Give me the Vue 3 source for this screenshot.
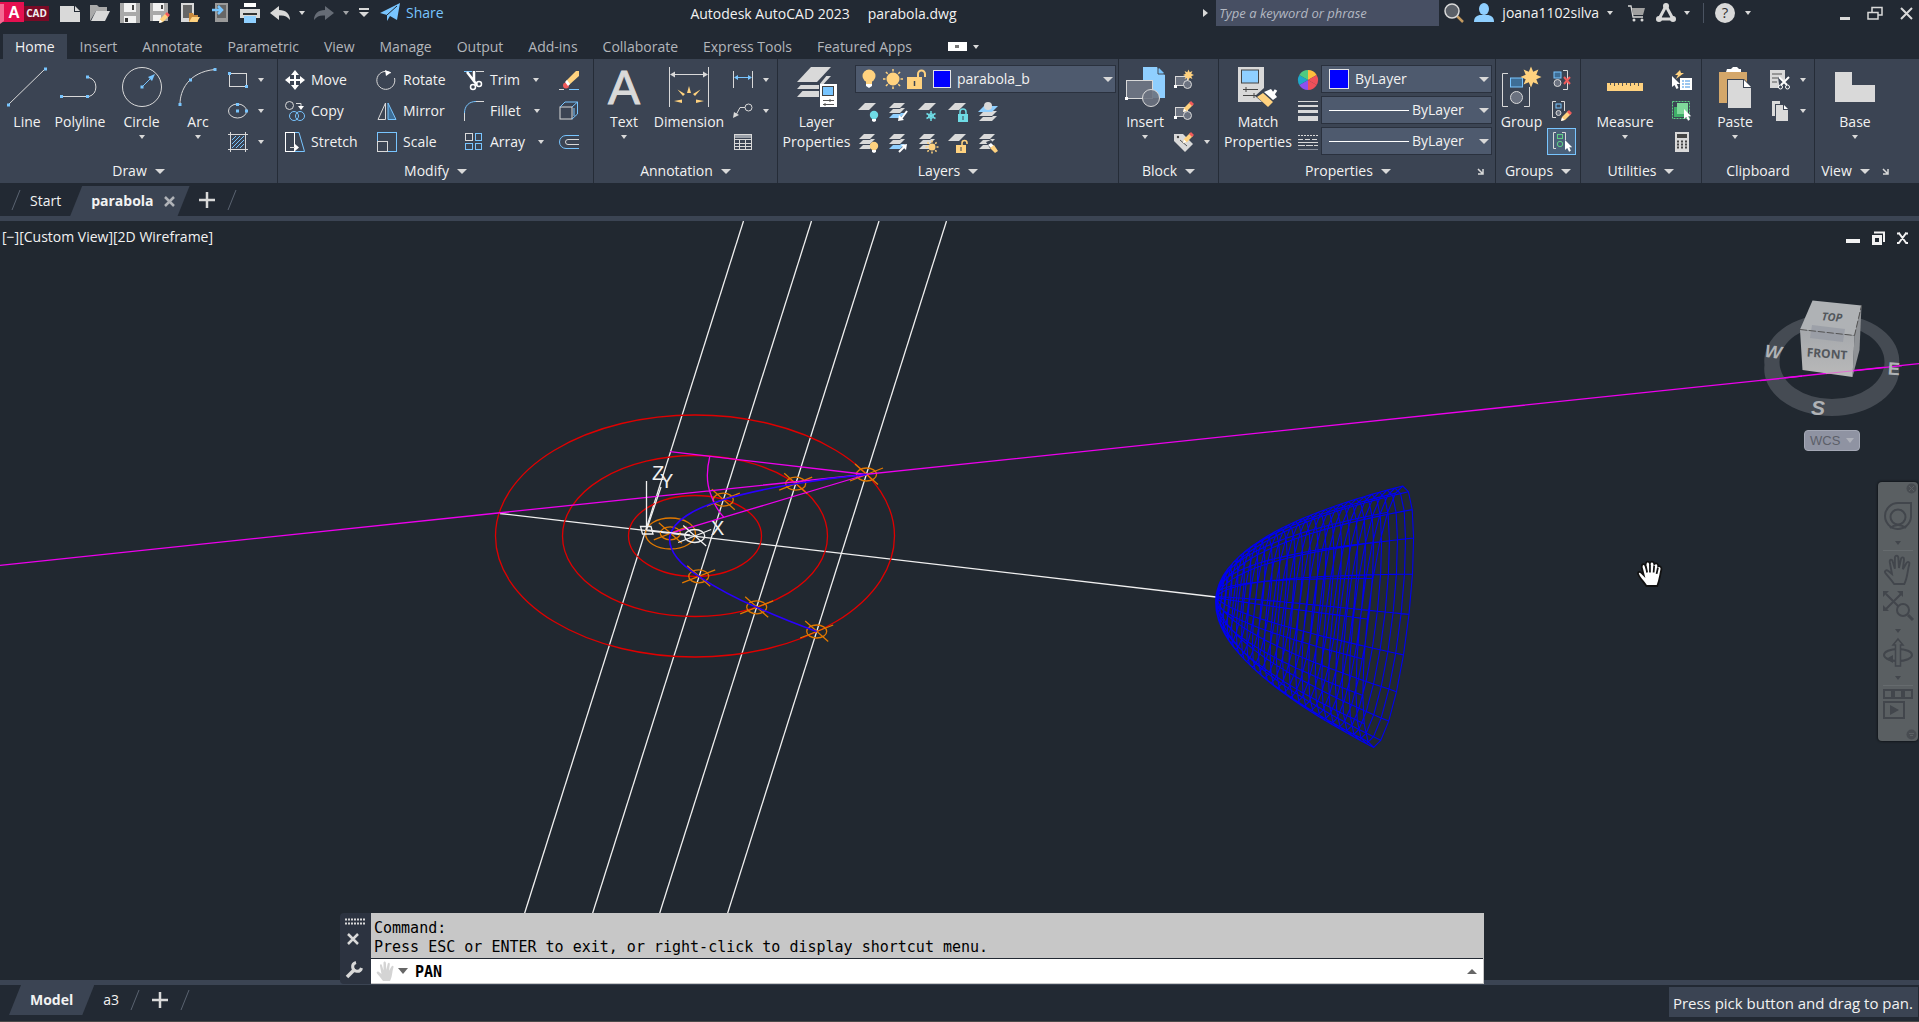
<script setup>
import { h } from 'vue'

const G = '#d9d9d9'
const B = '#78c5ff'
const Y = '#ffd27f'
const R = '#f05a5a'
const T = '#6fdce6'
const N = '#5fcf85'
const P = '#3b4453'

const sq = (x, y) => `<rect x="${x - 1.5}" y="${y - 1.5}" width="3" height="3" fill="${B}"/>`
const line = (d, c = G, w = 1) => `<path d="${d}" fill="none" stroke="${c}" stroke-width="${w}"/>`
const fill = (d, c = G) => `<path d="${d}" fill="${c}"/>`
const sheet = `${fill('M0 8L7 1H18L11 8Z')}`
const stack = (last = G) =>
  `${fill('M1 16L6 11H17L12 16Z', last)}${fill('M1 12L6 7H17L12 12Z', P)}${fill('M1 11L6 6H17L12 11Z')}${fill('M1 7L6 2H17L12 7Z', P)}${fill('M1 6L6 1H17L12 6Z')}`
const bulb = (c) => `<circle cx="16" cy="13" r="4.2" fill="${c}"/>${fill('M14 17H18V19L16 20L14 19Z', '#fff')}`
const pencil = (x, y) => `<g transform="translate(${x} ${y})">${fill('M0 10L1 6L7 0L10 3L4 9Z', Y)}${fill('M6 1L8 -1L11 2L9 4Z', R)}${fill('M0 10L1 6.500L3.500 9Z', '#fff')}</g>`
const pointer = (x, y, s = 1) => `<g transform="translate(${x} ${y}) scale(${s})">${fill('M0 0V11L2.500 9L4.500 13L6.500 12L4.800 8H8Z', '#fff')}</g>`
const scissors = (x, y) => `<g transform="translate(${x} ${y})">${line('M0 0L8 8M10 0L2 8', '#fff', 2)}<circle cx="1.500" cy="10" r="2" fill="none" stroke="#fff"/><circle cx="8.500" cy="10" r="2" fill="none" stroke="#fff"/></g>`
const star = (cx, cy, r, n = 8) => {
  const pts = []
  for (let i = 0; i < n * 2; i++) {
    const a = (Math.PI * i) / n - Math.PI / 2
    const q = i % 2 ? r * 0.55 : r
    pts.push(`${(cx + q * Math.cos(a)).toFixed(1)},${(cy + q * Math.sin(a)).toFixed(1)}`)
  }
  return `<polygon points="${pts.join(' ')}" fill="${Y}"/>`
}
const sun = (cx, cy, r, len) => {
  let d = ''
  for (let i = 0; i < 8; i++) {
    const a = (Math.PI * i) / 4
    d += `M${cx + (r + 1) * Math.cos(a)} ${cy + (r + 1) * Math.sin(a)}L${cx + len * Math.cos(a)} ${cy + len * Math.sin(a)}`
  }
  return `<circle cx="${cx}" cy="${cy}" r="${r}" fill="${Y}"/>${line(d, Y, 1.5)}`
}
const wheel = ['#ffbe3c', '#f0505a', '#f0505a', '#8f50ee', '#1fa8c9', '#4fcb80'].map((c, i) => {
  const a = ((i * 60 - 90) * Math.PI) / 180
  const b = ((i * 60 - 30) * Math.PI) / 180
  return fill(`M10 10L${10 + 10 * Math.cos(a)} ${10 + 10 * Math.sin(a)}A10 10 0 0 1 ${10 + 10 * Math.cos(b)} ${10 + 10 * Math.sin(b)}Z`, c)
}).join('')
const blockBase = `<rect x="1.500" y="6.500" width="12" height="9" fill="#6b7280" stroke="${G}"/><circle cx="13.500" cy="14.500" r="4" fill="#6b7280" stroke="${G}"/><rect x="0" y="15" width="3" height="3" fill="#fff"/>`
const hand = 'M7 20C5 17 3 15 1 12.500C0 11 1.500 10 3 11L5.500 13L4 5C3.700 3 5.500 2.500 6 4.500L7.500 9.500L7.500 2C7.500 0 9.700 0 9.900 2L10.300 9L11.700 2.800C12.200 1 14 1.400 13.800 3.200L13 9.800L15.500 5.500C16.500 4 18 5 17.400 6.500C16 11 16.500 15 14 20Z'

const icons = {
  caret: [6, 4, fill('M0 0H6L3 4Z')],
  bigcaret: [10, 5, fill('M0 0H10L5 5Z')],
  rightcaret: [5, 8, fill('M0 0L5 4L0 8Z')],
  launcher: [7, 7, line('M1 1L6 6M6 1V6H1', G, 1.500)],
  logo: [24, 22, `${fill('M0 0H24V20H0Z', '#e51050')}${fill('M0 2H4V19L0 22Z', '#f46a93')}<text x="14" y="16" text-anchor="middle" font-family="Liberation Sans,sans-serif" font-weight="700" font-size="16" fill="#fff">A</text>`],
  new: [20, 20, `${fill('M0 3H14V9H20V19H0Z')}${fill('M15 3L20 8H15Z')}`],
  open: [20, 20, `${fill('M0 18V2H7L9 4H17V8H6Z', '#a9a9a9')}${fill('M1 18L6 8H20L15 18Z')}`],
  save: [20, 20, `${fill('M0 0H20V20H0Z', '#a9a9a9')}${fill('M4 0H16V9H4Z', '#f2f2f2')}${fill('M12 2H14V7H12Z', '#444')}${fill('M4 13H16V20H4Z', '#f2f2f2')}${fill('M5 15H8V19H5Z', '#333')}`],
  saveas: [20, 20, `${fill('M0 0H18V18H0Z', '#a9a9a9')}${fill('M3 0H14V8H3Z', '#f2f2f2')}${fill('M11 2H13V6H11Z', '#444')}${fill('M3 12H11V18H3Z', '#f2f2f2')}${pencil(9, 10)}`],
  openweb: [20, 20, `${fill('M1 0H14V19H1Z')}${fill('M3 2H12V15H3Z', '#666')}${fill('M9 19V10H13L14 12H18V19Z', '#c98a3c')}${fill('M9 19L12 14H20L17 19Z', Y)}`],
  saveweb: [20, 20, `${fill('M5 0H18V19H5Z', '#9a9a9a')}${fill('M7 2H16V15H7Z', '#666')}${line('M2 7H12M8 3L12 7L8 11', B, 2.500)}`],
  print: [20, 20, `${fill('M4 0H16V4H4Z', '#fff')}${fill('M0 6H20V15H0Z')}${fill('M3 10H17V12H3Z', '#333')}${fill('M4 13H16V20H4Z', '#8fcfff')}`],
  undo: [20, 20, fill('M0 10L9 3V7C16 7 20 11 20 17C17 13 14 12 9 12.500V17Z')],
  redo: [20, 20, fill('M20 10L11 3V7C4 7 0 11 0 17C3 13 6 12 11 12.500V17Z', '#666c76')],
  custom: [10, 10, `${line('M0 1H10', G, 2)}${fill('M0 4H10L5 9Z')}`],
  share: [20, 20, `${fill('M0 10L20 0L17 17L10 13L7 18V12Z', B)}${line('M7 12L17 3', '#222933')}`],
  search: [20, 20, `${line('M13 13L19 19', '#c49a60', 2.500)}<circle cx="8" cy="8" r="7" fill="#5b6068" stroke="${G}" stroke-width="1.500"/>`],
  user: [20, 20, `${fill('M0 19C0 14 3 12 7 12H13C17 12 20 14 20 19Z', '#8fcfff')}<ellipse cx="10" cy="6" rx="5" ry="6" fill="#8fcfff"/>`],
  cart: [17, 18, `${line('M0 2H3L5 13H15', G, 1.300)}${fill('M4 4H17L15 11H5Z', '#a0a0a0')}<circle cx="6" cy="16" r="1.500" fill="${G}"/><circle cx="14" cy="16" r="1.500" fill="${G}"/>`],
  adsk: [20, 20, `${line('M10 3L17 16H3Z', G, 3)}<circle cx="10" cy="3" r="3" fill="${G}"/><circle cx="3" cy="16" r="3" fill="${G}"/><circle cx="17" cy="16" r="3" fill="${G}"/>`],
  help: [20, 20, `<circle cx="10" cy="10" r="10" fill="${G}"/><text x="10" y="15" text-anchor="middle" font-family="Open Sans,sans-serif" font-size="15" fill="#333">?</text>`],
  winmin: [10, 14, fill('M0 11H10V14H0Z')],
  winrestore: [16, 14, line('M1 6.500H11V13H1ZM5 6V1.500H15V9H11', G, 1.500)],
  winclose: [13, 13, line('M1 1L12 12M12 1L1 12', G, 2)],
  docmin: [14, 14, fill('M0 8H14V12H0Z', '#f2f2f2')],
  docrestore: [14, 14, `${line('M3 1.500H13V11', '#f2f2f2', 2)}<rect x="2.500" y="5.500" width="7" height="7" fill="none" stroke="#f2f2f2" stroke-width="3"/>`],
  docclose: [14, 14, line('M2.500 1.500L10.500 12.500M10.500 1.500L2.500 12.500M1 2.500H4M9 2.500H12M1 12H4M9 12H12', '#f2f2f2', 2)],
  closex: [11, 11, line('M1 1L10 10M10 1L1 10', '#b0b3b8', 2.500)],
  plus: [16, 16, line('M8 0V16M0 8H16', G, 2.500)],
  slash: [10, 20, line('M9 0L1 20', '#5a6371')],

  line: [40, 40, `${line('M1 38L38 2')}${sq(1.500, 38)}${sq(38.500, 2)}`],
  polyline: [40, 40, `${line('M2 29.500H29A10 10 0 0 0 29 10.500H28')}${sq(1.500, 29.500)}${sq(27.500, 29.500)}${sq(27.500, 10)}`],
  circle: [40, 40, `<circle cx="20" cy="20" r="19.500" fill="none" stroke="${G}"/>${line('M20 20L30 10', B)}${fill('M33 7L26 10L30 14Z', B)}${sq(20, 20)}`],
  arc: [40, 40, `${line('M2 37C2 24 10 5 37 2.500')}${sq(2, 37.500)}${sq(12.500, 13)}${sq(37, 2.500)}`],
  rect: [20, 20, `<rect x="1.500" y="3.500" width="17" height="13" fill="none" stroke="${G}"/>${sq(1.500, 3.500)}${sq(18.500, 16.500)}`],
  ellipse: [20, 20, `<ellipse cx="9.500" cy="10" rx="9" ry="7" fill="none" stroke="${G}"/>${sq(9.500, 3.500)}${sq(9.500, 10)}${sq(18.500, 10)}`],
  hatch: [20, 20, `${line('M4 8L8 4M4 12L12 4M4 16L16 4M8 16L16 8M12 16L16 12', B)}${line('M2.500 0V20M17.500 0V20M0 2.500H20M0 17.500H20')}`],
  move: [20, 20, `${line('M10 3V17M3 10H17', '#fff', 2)}${fill('M10 0L14 5H6ZM10 20L6 15H14ZM0 10L5 6V14ZM20 10L15 14V6Z', '#fff')}`],
  copy: [20, 20, `<circle cx="4.500" cy="4.500" r="4" fill="none" stroke="${G}"/>${line('M11 2.500H16V6')}${fill('M13 5H19L16 9Z', '#fff')}<circle cx="9" cy="15" r="4.500" fill="none" stroke="${B}"/><circle cx="15" cy="15" r="4.500" fill="none" stroke="${B}"/>`],
  stretch: [20, 20, `<rect x=".500" y=".500" width="9" height="19" fill="none" stroke="#fff"/>${line('M10 .500H14L19.500 19.500H10', B)}${line('M5 15.500H11')}${fill('M10 12L14 15.500L10 19Z', '#fff')}`],
  rotate: [20, 20, `${line('M14 3A9 9 0 1 0 17.500 8')}${fill('M8 0L14 2.500L9 6Z', '#fff')}`],
  mirror: [20, 20, `${line('M8.500 2V18.500H1Z')}${fill('M11 2L19 18.500H11Z', '#3e6e96')}${line('M11 2L19 18.500H11Z', B)}`],
  scale: [20, 20, `<rect x=".500" y=".500" width="19" height="19" fill="none" stroke="${B}"/><rect x=".500" y="9.500" width="10" height="10" fill="none" stroke="${G}"/>`],
  trim: [20, 20, `${line('M0 1.500H8', B)}${line('M12 1.500H20', G)}${line('M3 2L13 15M10 1L10 12', '#fff', 2.500)}<circle cx="9" cy="17" r="2.500" fill="none" stroke="#fff" stroke-width="1.500"/><circle cx="15" cy="14" r="2.500" fill="none" stroke="#fff" stroke-width="1.500"/>`],
  fillet: [20, 20, `${line('M.500 20V12M12 .500H20')}${line('M.500 12C.500 5 5 .500 12 .500', B)}`],
  array: [20, 20, `<rect x="1.500" y="1.500" width="7" height="7" fill="none" stroke="${G}"/><rect x="11.500" y="1.500" width="6" height="7" fill="none" stroke="${B}"/><rect x="1.500" y="11.500" width="7" height="6" fill="none" stroke="${B}"/><rect x="11.500" y="11.500" width="6" height="6" fill="none" stroke="${B}"/>`],
  erase: [20, 20, `${fill('M7 11L17 1H20V6L10 15Z', Y)}<circle cx="7" cy="15.500" r="3" fill="${R}"/>${fill('M6 12L8 10L11 14L9 16Z', '#fff')}${line('M0 19.500H5')}${line('M10 19.500H20', B)}`],
  explode: [20, 20, `<rect x="1" y="6" width="12" height="12" fill="none" stroke="${G}"/>${line('M1 6L6 1H18.500V13L13 18M13 6L18.500 1M15 7V15', B)}`],
  offset: [20, 20, `${line('M20 3.500H7A6.500 6.500 0 0 0 7 16.500H20', B)}${line('M20 7.500H9A2.500 2.500 0 0 0 9 12.500H20', G)}`],
  textA: [40, 40, `<text x="20" y="37" text-anchor="middle" font-family="Liberation Sans,sans-serif" font-size="48" fill="${G}" stroke="${G}">A</text>`],
  dimension: [40, 40, `${line('M.500 0V40M39.500 0V40M2 7.500H38')}${fill('M1 7.500L6 4.500V10.500ZM39 7.500L34 4.500V10.500Z')}${fill('M18 26L20 19L22 26ZM14 29L8.500 22.500L16 27ZM26 29L31.500 22.500L24 27ZM13 36L5 34L13 32.500ZM27 36L35 34L27 32.500Z', Y)}`],
  linear: [20, 20, `${line('M.500 1V18M19.500 1V18')}${line('M2 7.500H18', B)}${fill('M1 7.500L5 5V10ZM19 7.500L15 5V10Z', B)}`],
  leader: [20, 20, `<circle cx="15.500" cy="6.500" r="3.500" fill="none" stroke="${G}"/>${line('M12 6.500H7L3 14')}${fill('M0 17L1 11L6 14Z')}`],
  table: [20, 20, `<rect x="1.500" y="2.500" width="17" height="15" fill="none" stroke="${G}"/>${fill('M2 3H18V6H2Z', '#9aa0a8')}${line('M1 7.500H19M1 11.500H19M1 14.500H19M6.500 7V18M12.500 7V18')}`],
  layers: [40, 40, `${fill('M0 30L11 18H33L22 30Z')}${fill('M0 24L11 11H33L22 24Z', P)}${fill('M0 22L12 9H34L22 22Z')}${fill('M0 18L13 2H35L22 18Z', P)}${fill('M0 15L14 0H34L20 15Z')}${fill('M22 17H40V40H22Z', P)}${fill('M23 17H40V40H23Z', '#fff')}<rect x="25.500" y="19.500" width="11" height="9" fill="${B}" stroke="#444"/>${line('M26 33.500H37M26 37.500H37M33 32V35M28 36V39', '#555')}`],
  lOff: [20, 20, sheet + bulb(T)],
  lIso: [20, 20, `${stack('#8fcfff')}${line('M19 9L13 17', '#fff', 2)}${fill('M10 19L11 13L16 18Z', '#fff')}`],
  lFreeze: [20, 20, `${sheet}${line('M13 9V19M8.500 11.500L17.500 16.500M17.500 11.500L8.500 16.500', T, 1.500)}<circle cx="13" cy="14" r="2.500" fill="none" stroke="${T}"/>`],
  lLock: [20, 20, `${sheet}${line('M12 12V10A3 3 0 0 1 18 10V12', T, 1.500)}${fill('M10 12H20V20H10Z', T)}${line('M15 14V18', P)}`],
  lMatch: [20, 20, `${fill('M1 19L6 14H19L14 19Z')}${fill('M1 15L6 10H19L14 15Z', P)}${fill('M1 14L6 9H19L14 14Z')}${fill('M0 10L6 4H20L14 10Z', '#8fcfff')}<circle cx="10" cy="4" r="4" fill="${G}"/>`],
  lOn: [20, 20, stack() + bulb(Y)],
  lUniso: [20, 20, `${stack('#8fcfff')}${line('M11 19L17 13', '#fff', 2)}${fill('M19 11L18 17L13 12Z', '#fff')}`],
  lThaw: [20, 20, stack() + sun(14, 14, 3.500, 6.500)],
  lUnlock: [20, 20, `${sheet}${line('M14 12V10A2.500 2.500 0 0 1 19 10V11', Y, 1.500)}${fill('M8 12H18V20H8Z', Y)}${line('M13 14V18', P)}`],
  lChange: [20, 20, `${stack()}${fill('M8 9L13 7L20 15L15 20Z', P)}${fill('M10 12L13 10L16 13L13 15Z', '#fff')}${fill('M12 15L16 12L20 18L17 20Z', Y)}`],
  bulb: [14, 20, `<circle cx="7" cy="7" r="6.500" fill="${Y}"/>${fill('M4 12H10V15H4Z', Y)}${fill('M4 15H10V17L7 19L4 17Z', '#fff')}`],
  sun: [20, 20, sun(10, 10, 6.500, 10)],
  unlock: [20, 20, `${line('M11 9V5A3.500 3.500 0 0 1 18 5V8', Y, 2)}${fill('M0 8H15V20H0Z', Y)}${line('M7.500 12V17', P, 1.500)}`],
  insert: [40, 40, `${fill('M18 0H32L40 8V31H18Z', '#8fcfff')}${line('M33 0V7H40', P)}${fill('M34 1L39 6H34Z', B)}<rect x="1.500" y="13.500" width="26" height="18" fill="#6b7280" stroke="${G}"/><circle cx="26" cy="31" r="8.500" fill="#6b7280" fill-opacity=".9" stroke="${G}"/>${fill('M0 30H3V33H0Z', '#fff')}`],
  bNew: [20, 20, blockBase + star(14.500, 5, 5.500)],
  bEdit: [20, 20, blockBase + pencil(9, 1)],
  bAttr: [20, 20, `${fill('M0 2H9L19 12L11 20L0 9Z')}${line('M6 8L13 14', '#555')}<circle cx="4" cy="5" r="1.200" fill="#444"/>${pencil(9, 1)}`],
  match: [40, 40, `${fill('M0 0H26V35H0Z')}<rect x="3.500" y="3" width="17" height="13" fill="#8fcfff" stroke="#444"/>${line('M5 22.500H20M5 28.500H20M8 20V25M16 26V31', '#444')}${fill('M17 29L26 21L40 29L30 40Z', P)}${fill('M26 25L33 22L39 30L35 33Z', '#fff')}${line('M34 29L38 23', '#fff', 3)}${fill('M19 30L25 26L35 35L30 40Z', Y)}`],
  wheel: [20, 20, wheel],
  weights: [20, 20, `${line('M0 .500H20')}${line('M0 5H20', G, 2)}${line('M0 10.500H20', G, 3)}${line('M0 17.500H20', G, 5)}`],
  types: [20, 20, `<path d="M0 3.500H20" stroke="${G}" stroke-dasharray="2 1"/><path d="M0 7.500H20" stroke="${G}" stroke-dasharray="5 2"/>${line('M0 10.500H20')}<path d="M0 13.500H20" stroke="${G}" stroke-dasharray="7 1"/>${line('M0 17.500H20', '#8a919c')}`],
  group: [40, 40, `${line('M6 6.500H.500V39.500H6M22 39.500H27.500V20')}<rect x="8.500" y="11" width="12" height="9" fill="#3e6e96" stroke="${B}"/><circle cx="14.500" cy="30.500" r="6" fill="#6b7280" stroke="${G}"/>${star(29, 10, 10.500)}`],
  ungroup: [20, 20, `${line('M11 .500H15.500V19.500H11')}<rect x="2" y="2" width="7" height="6" fill="#3e6e96" stroke="${B}"/><circle cx="5.500" cy="13" r="3.500" fill="#6b7280" stroke="${G}"/>${line('M12 7L18 14M18 7L12 14', R, 2)}`],
  gEdit: [20, 20, `${line('M4 .500H.500V16.500H4M9 .500H12.500V10')}<rect x="4" y="3" width="5" height="4" fill="none" stroke="${B}"/><circle cx="6.500" cy="12" r="2.500" fill="#6b7280" stroke="${G}"/>${pencil(9, 10)}`],
  gSel: [20, 20, `${line('M4 .500H1.500V16.500H4M10 .500H13.500V8')}<rect x="5.500" y="2.500" width="5" height="4" fill="none" stroke="${N}"/><circle cx="8" cy="12" r="2.700" fill="none" stroke="${N}"/>${pointer(13, 8, 0.9)}`],
  measure: [40, 40, `${fill('M2 16H38V24H2Z', Y)}${line('M5.500 16V18M9.500 16V19M13.500 16V18M17.500 16V19M21.500 16V18M25.500 16V19M29.500 16V18M33.500 16V19', '#555')}`],
  quick: [20, 20, `${fill('M8 0L3 5H6L4 9L12 3H9Z', Y)}${fill('M8 8H20V20H8Z', '#fff')}${line('M10 11H12M10 14H12M10 17H12M13 11H18M13 14H18M13 17H18', '#3a8fe0')}${pointer(0, 6)}`],
  selAll: [20, 20, `<rect x=".500" y=".500" width="17" height="17" fill="none" stroke="${N}" stroke-dasharray="2 1"/>${fill('M2 6H13V16H2Z', '#3fae68')}${fill('M5 2H16V13H5Z', '#7fd99a')}${pointer(12, 8, 0.9)}`],
  calc: [20, 20, `${fill('M3 0H17V20H3Z')}${fill('M5 2H15V6H5Z', '#444')}<path d="M5 9.500H15M5 12.500H15M5 15.500H15" stroke="#444" stroke-width="2" stroke-dasharray="2 2"/>`],
  paste: [40, 40, `${fill('M4 5H32V36H4Z', '#d4a76a')}${fill('M12 2H16L18 0H22L24 2H26V5H11Z', '#fff')}${fill('M12 12H29L37 20V41H12Z', P)}${fill('M13 13H28V21H36V41H13Z')}${fill('M29 13L36 20H29Z', '#fff')}`],
  cut: [20, 20, `${fill('M0 0H15V18H0Z')}${line('M2 4H12M2 8H9M2 12H7', '#555')}${fill('M8 7H10L14 11L18 7H20V20H9V14Z', P)}${scissors(9, 7)}`],
  pages: [20, 20, `${fill('M2 0H10V15H2Z')}${fill('M5 3H14L19 8V20H5Z', P)}${fill('M6 4H13V9H18V20H6Z')}${fill('M14 4L18 8H14Z', '#fff')}`],
  base: [40, 40, fill('M0 5H17V18H40V35H0Z')],

  wrench: [18, 18, `${line('M2 16L10 8', G, 3.500)}${line('M11 1.500A4.500 4.500 0 1 0 16.500 7', G, 3)}`],
  grip: [20, 7, `<path d="M0 1.500H20M0 5.500H20" stroke="${G}" stroke-width="2" stroke-dasharray="2 1"/>`],
  cross: [12, 12, line('M1 1L11 11M11 1L1 11', G, 2.500)],
  hand: [20, 20, fill(hand, '#d4d4d4')],
  downgray: [10, 6, fill('M0 0H10L5 6Z', '#666')],
  upgray: [10, 5, fill('M0 5H10L5 0Z', '#666')],

  navclose: [11, 11, '<circle cx="5.500" cy="5.500" r="5" fill="#484c51"/><path d="M3 3L8 8M8 3L3 8" stroke="#5c6063"/>'],
  navmenu: [11, 11, '<circle cx="5.500" cy="5.500" r="5" fill="#484c51"/><path d="M3 4.500H8M4 6.500H7" stroke="#5c6063"/>'],
  navwheel: [30, 30, line('M15 1H28V15A13 13 0 1 1 15 1Z', '#42464c', 2) + '<circle cx="15" cy="15" r="7.500" fill="none" stroke="#42464c" stroke-width="2"/><path d="M7 26Q15 20 23 26" fill="none" stroke="#42464c" stroke-width="2"/>'],
  navhand: [30, 30, `<path transform="translate(1 0) scale(1.450)" d="${hand}" fill="none" stroke="#42464c" stroke-width="1.300"/>`],
  navzoom: [30, 30, `${line('M3 3L18 18M18 3L3 18', '#42464c', 2)}${fill('M0 0H6L0 6ZM20 0V6L14 0ZM0 20V14L6 20Z', '#42464c')}<circle cx="20" cy="19" r="6" fill="#5a5f62" stroke="#42464c" stroke-width="2"/>${line('M25 24L30 29', '#42464c', 3)}`],
  navorbit: [30, 30, `<ellipse cx="15" cy="17" rx="14" ry="6" fill="none" stroke="#42464c" stroke-width="2"/><path d="M15 1L20 7H17.500V28H12.500V7H10Z" fill="#5a5f62" stroke="#42464c" stroke-width="1.500"/>${fill('M3 21L10 17V25Z', '#42464c')}`],
  navshow: [30, 30, `<path d="M1 1H9V9H1ZM11 1H19V9H11ZM21 1H29V9H21ZM1 13H21V29H1Z" fill="none" stroke="#42464c" stroke-width="2"/>${fill('M7 16V26L16 21Z', '#42464c')}`],
  navcaret: [6, 4, fill('M0 0H6L3 4Z', '#42464c')],
}

const Icon = ({ name }) => {
  const [w, hh, body] = icons[name]
  return h('svg', { width: w, height: hh, viewBox: `0 0 ${w} ${hh}`, 'aria-hidden': 'true', style: 'flex:none;display:block;overflow:visible', innerHTML: body })
}
Icon.props = ['name']

const quickTools = ['new', 'open', 'save', 'saveas', 'openweb', 'saveweb', 'print', 'undo']
const ribbonTabs = ['Home', 'Insert', 'Annotate', 'Parametric', 'View', 'Manage', 'Output', 'Add-ins', 'Collaborate', 'Express Tools', 'Featured Apps']

const modify = [
  ['move', 'Move'], ['rotate', 'Rotate'], ['trim', 'Trim', 1], ['erase'],
  ['copy', 'Copy'], ['mirror', 'Mirror'], ['fillet', 'Fillet', 1], ['explode'],
  ['stretch', 'Stretch'], ['scale', 'Scale'], ['array', 'Array', 1], ['offset'],
]
const layerTools = ['lOff', 'lIso', 'lFreeze', 'lLock', 'lMatch', 'lOn', 'lUniso', 'lThaw', 'lUnlock', 'lChange']
const navTools = ['navwheel', 'navcaret', 'navhand', 'navzoom', 'navcaret', 'navorbit', 'navcaret', 'navshow']

const directrices = [[743.5, 503.5], [811.5, 571.5], [879, 638.5], [946.5, 706.5]]
const redRings = [[199.5, 121], [132.5, 80.5], [66.5, 40.5]]
const nodes = [[866.5, 474.5], [795.7, 483.7], [723.3, 499.7], [670.3, 533.3], [698.7, 576.3], [756.7, 607.3], [816.7, 631.5]]

// Wireframe of the revolved parabola: 20 meridians crossed by rings at equal arc length.
const apex = [1216.5, 596.8]
const rim = [1388.2, 616.7]
const ax = [14.5, -130.7]
const bx = [20.8, -2.3]
const surface = (u, t) => {
  const c = Math.cos(t), s = Math.sin(t)
  return [0, 1].map((i) => (apex[i] + (rim[i] - apex[i]) * u * u + (ax[i] * c + bx[i] * s) * u).toFixed(1)).join(' ')
}
const ringCount = 28
const levels = (() => {
  const steps = 2000
  const len = [0]
  for (let i = 1; i <= steps; i++) {
    const u = (i - 0.5) / steps
    len.push(len[i - 1] + Math.hypot(395, 1060 * u) / steps)
  }
  const out = []
  for (let k = 1, i = 0; k <= ringCount; k++) {
    while (i < steps && len[i] < (len[steps] * k) / ringCount) i++
    out.push(i / steps)
  }
  return out
})()
const angles = Array.from({ length: 20 }, (_, k) => (k * Math.PI) / 10)
const mesh = [
  ...levels.map((u) => 'M' + angles.map((t) => surface(u, t)).join('L') + 'Z'),
  ...angles.map((t) => 'M' + [0, ...levels].map((u) => surface(u, t)).join('L')),
].join('')
</script>

<template>
  <div class="app">
    <header class="titlebar">
      <div class="quick">
        <button class="logo" aria-label="Application menu"><Icon name="logo" /><span class="cad">CAD</span></button>
        <button v-for="t in quickTools" :key="t" :aria-label="t"><Icon :name="t" /></button>
        <button class="drop" aria-label="Undo list"><Icon name="caret" /></button>
        <button aria-label="Redo"><Icon name="redo" /></button>
        <button class="drop dim" aria-label="Redo list"><Icon name="caret" /></button>
        <button class="customize" aria-label="Customize"><Icon name="custom" /></button>
        <button class="share"><Icon name="share" />Share</button>
      </div>
      <h1><span>Autodesk AutoCAD 2023</span><span>parabola.dwg</span></h1>
      <div class="account">
        <Icon name="rightcaret" />
        <input type="text" placeholder="Type a keyword or phrase" aria-label="Search" />
        <button class="find" aria-label="Search"><Icon name="search" /></button>
        <button class="user"><Icon name="user" />joana1102silva<Icon name="caret" /></button>
        <button aria-label="Store"><Icon name="cart" /></button>
        <button class="apps" aria-label="Autodesk apps"><Icon name="adsk" /><Icon name="caret" /></button>
        <button class="help" aria-label="Help"><Icon name="help" /><Icon name="caret" /></button>
      </div>
      <div class="window">
        <button aria-label="Minimize"><Icon name="winmin" /></button>
        <button aria-label="Restore"><Icon name="winrestore" /></button>
        <button aria-label="Close"><Icon name="winclose" /></button>
      </div>
    </header>

    <nav class="tabs">
      <button v-for="(t, i) in ribbonTabs" :key="t" :class="{ on: i === 0 }">{{ t }}</button>
      <button class="collapse" aria-label="Minimize ribbon"><span></span><Icon name="caret" /></button>
    </nav>

    <section class="ribbon">
      <div class="panel draw">
        <div class="body">
          <button class="big"><Icon name="line" />Line</button>
          <button class="big"><Icon name="polyline" />Polyline</button>
          <button class="big"><Icon name="circle" />Circle<Icon name="caret" class="under" /></button>
          <button class="big"><Icon name="arc" />Arc<Icon name="caret" class="under" /></button>
          <div class="rows">
            <button v-for="n in ['rect', 'ellipse', 'hatch']" :key="n" class="tool" :aria-label="n"><Icon :name="n" /><Icon name="caret" class="side" /></button>
          </div>
        </div>
        <button class="name">Draw<Icon name="bigcaret" /></button>
      </div>

      <div class="panel modify">
        <div class="body">
          <button v-for="m in modify" :key="m[0]" class="tool" :aria-label="m[0]"><Icon :name="m[0]" /><span v-if="m[1]">{{ m[1] }}</span><Icon v-if="m[2]" name="caret" class="after" /></button>
        </div>
        <button class="name">Modify<Icon name="bigcaret" /></button>
      </div>

      <div class="panel annotation">
        <div class="body">
          <button class="big"><Icon name="textA" />Text<Icon name="caret" class="under" /></button>
          <button class="big"><Icon name="dimension" />Dimension</button>
          <div class="rows">
            <button class="tool" aria-label="Linear"><Icon name="linear" /><Icon name="caret" class="side" /></button>
            <button class="tool" aria-label="Leader"><Icon name="leader" /><Icon name="caret" class="side" /></button>
            <button class="tool" aria-label="Table"><Icon name="table" /></button>
          </div>
        </div>
        <button class="name">Annotation<Icon name="bigcaret" /></button>
      </div>

      <div class="panel layers">
        <div class="body">
          <button class="big"><Icon name="layers" />Layer<br />Properties</button>
          <div class="stackcol">
            <div class="combo">
              <Icon name="bulb" /><Icon name="sun" class="c-sun" /><Icon name="unlock" class="c-lock" /><i class="swatch"></i>
              <select aria-label="Layer"><option>parabola_b</option></select>
              <Icon name="bigcaret" class="arrow" />
            </div>
            <div class="icongrid">
              <button v-for="n in layerTools" :key="n" class="tool" :aria-label="n"><Icon :name="n" /></button>
            </div>
          </div>
        </div>
        <button class="name">Layers<Icon name="bigcaret" /></button>
      </div>

      <div class="panel block">
        <div class="body">
          <button class="big"><Icon name="insert" />Insert<Icon name="caret" class="under" /></button>
          <div class="rows">
            <button class="tool" aria-label="Create"><Icon name="bNew" /></button>
            <button class="tool" aria-label="Edit"><Icon name="bEdit" /></button>
            <button class="tool" aria-label="Edit attributes"><Icon name="bAttr" /><Icon name="caret" class="side" /></button>
          </div>
        </div>
        <button class="name">Block<Icon name="bigcaret" /></button>
      </div>

      <div class="panel properties">
        <div class="body">
          <button class="big"><Icon name="match" />Match<br />Properties</button>
          <div class="rows">
            <button v-for="n in ['wheel', 'weights', 'types']" :key="n" class="tool" :aria-label="n"><Icon :name="n" /></button>
          </div>
          <div class="rows">
            <div class="combo"><i class="swatch"></i><select aria-label="Color"><option>ByLayer</option></select><Icon name="bigcaret" class="arrow" /></div>
            <div class="combo"><i class="rule"></i><select aria-label="Lineweight"><option>ByLayer</option></select><Icon name="bigcaret" class="arrow" /></div>
            <div class="combo"><i class="rule"></i><select aria-label="Linetype"><option>ByLayer</option></select><Icon name="bigcaret" class="arrow" /></div>
          </div>
        </div>
        <div class="foot">
          <button class="name">Properties<Icon name="bigcaret" /></button>
          <button class="launch" aria-label="Properties palette"><Icon name="launcher" /></button>
        </div>
      </div>

      <div class="panel groups">
        <div class="body">
          <button class="big"><Icon name="group" />Group</button>
          <div class="rows">
            <button class="tool" aria-label="Ungroup"><Icon name="ungroup" /></button>
            <button class="tool" aria-label="Group edit"><Icon name="gEdit" /></button>
            <button class="tool on" aria-label="Group selection"><Icon name="gSel" /></button>
          </div>
        </div>
        <button class="name">Groups<Icon name="bigcaret" /></button>
      </div>

      <div class="panel utilities">
        <div class="body">
          <button class="big"><Icon name="measure" />Measure<Icon name="caret" class="under" /></button>
          <div class="rows">
            <button v-for="n in ['quick', 'selAll', 'calc']" :key="n" class="tool" :aria-label="n"><Icon :name="n" /></button>
          </div>
        </div>
        <button class="name">Utilities<Icon name="bigcaret" /></button>
      </div>

      <div class="panel clipboard">
        <div class="body">
          <button class="big"><Icon name="paste" />Paste<Icon name="caret" class="under" /></button>
          <div class="rows">
            <button v-for="n in ['cut', 'pages']" :key="n" class="tool" :aria-label="n"><Icon :name="n" /><Icon name="caret" class="side" /></button>
          </div>
        </div>
        <div class="name">Clipboard</div>
      </div>

      <div class="panel view">
        <div class="body">
          <button class="big"><Icon name="base" />Base<Icon name="caret" class="under" /></button>
        </div>
        <div class="foot">
          <button class="name">View<Icon name="bigcaret" /></button>
          <button class="launch" aria-label="View options"><Icon name="launcher" /></button>
        </div>
      </div>
    </section>

    <nav class="files">
      <Icon name="slash" />
      <button class="start">Start</button>
      <div class="sheet"><button>parabola</button><button aria-label="Close parabola"><Icon name="closex" /></button></div>
      <button class="add" aria-label="New drawing"><Icon name="plus" /></button>
      <Icon name="slash" />
    </nav>

    <main class="viewport">
      <svg class="drawing" viewBox="0 221 1919 759" preserveAspectRatio="xMidYMid slice" fill="none" stroke-width="1.3">
        <g stroke="#f0f0f0">
          <line v-for="[top, bottom] in directrices" :key="top" :x1="top" y1="221" :x2="bottom" y2="980" />
          <path d="M500 513.5L1216 597" />
        </g>
        <g stroke="#e00000">
          <ellipse v-for="r in redRings" :key="r[0]" cx="695" cy="536" :rx="r[0]" :ry="r[1]" />
        </g>
        <g stroke="#e07800">
          <ellipse cx="670.5" cy="533.5" rx="25" ry="15.5" />
          <g v-for="n in nodes" :key="n[0]" :transform="`translate(${n[0]} ${n[1]})`">
            <ellipse rx="10" ry="6.5" /><path d="M-11.500 -10.500L11.500 10M-16.500 6.500L16.500 -6.500" />
          </g>
        </g>
        <path stroke="#ee00ee" d="M0 565.300L1919 363.700M670.300 533.300L866.500 474.500L670 451.700M709.700 457C706 472 707 485 711 495C714 505 718 511 724 517.500" />
        <path stroke="#2a00ff" stroke-width="1.6" d="M866.500 474.500C840 477 818 480 795.700 483.700C770 488 745 493 723.300 499.700C695 508 672 521 669.600 537C668.500 552 681 565 698.700 576.300C715 587 735 598 756.700 607.300C776 616 796 624 816.700 631.500" />
        <g stroke="#f0f0f0">
          <g transform="translate(694.700 536)"><ellipse rx="10" ry="6.500" /><path d="M-11.500 -10.500L11.500 10M-16.500 6.500L16.500 -6.500" /></g>
          <path d="M646.500 481V530L690 535M646.500 530L661 487M640.500 526.500H651L653 534H642.500ZM646.500 526V530" />
        </g>
        <g class="axes"><text x="652" y="480">Z</text><text x="660" y="488">Y</text><text x="711" y="535">X</text></g>
        <path :d="mesh" stroke="#0000f0" stroke-width="1.100" />
        <g transform="translate(1637 559) scale(1.350)">
          <path d="M7 20C5 17 2 14 1 11.500C0 9.500 2 9 3.500 10.500L5 12L3.500 6C3.300 3.500 5.500 3 6.200 5L6.500 3.500C6.800 1.500 9 1.500 9.500 3.300C10 1.300 12.500 1.500 12.800 3.800C14 2.500 15.800 3.500 15.700 5.500C17 5 18.500 6 18 8C17 12 17 15 15 20Z" fill="#fff" stroke="#111" />
          <path d="M6.500 5L7.500 10M9.600 4V10M12.700 5L12.300 10M15.500 6.500L14.500 11" stroke="#111" />
        </g>
      </svg>

      <div class="viewlabel">[−][Custom View][2D Wireframe]</div>
      <div class="docwin">
        <button aria-label="Minimize drawing"><Icon name="docmin" /></button>
        <button aria-label="Restore drawing"><Icon name="docrestore" /></button>
        <button aria-label="Close drawing"><Icon name="docclose" /></button>
      </div>

      <div class="cube">
        <svg width="140" height="120" viewBox="1760 295 140 120">
          <defs><linearGradient id="face" x1="0" y1="0" x2="0" y2="1"><stop offset="0" stop-color="#a5a8ac" /><stop offset="1" stop-color="#b9b9b9" /></linearGradient></defs>
          <path fill="#454b53" fill-rule="evenodd" d="M1764.500 365A67.500 47 0 1 0 1899 365A67.500 47 0 1 0 1764.500 365ZM1779.500 362A52.500 37 0 1 1 1884.500 362A52.500 37 0 1 1 1779.500 362Z" />
          <path fill="#8f9296" d="M1861.500 305.500L1854.500 335.500L1852.500 377L1859.500 350Z" />
          <path fill="#afb2b5" d="M1812.500 300.500L1861.500 305.500L1854.500 335.500L1800 329.500Z" />
          <path fill="url(#face)" d="M1800 329.500L1854.500 335.500L1852.500 377L1802.500 370Z" />
          <path fill="#9499a2" fill-opacity=".7" d="M1812 325L1845 329L1843 342L1810 338Z" />
          <path fill="none" stroke="#555" stroke-dasharray="7 2" d="M1800 329.500L1854.500 335.500L1861.500 305.500" />
          <path fill="none" stroke="#ee00ee" stroke-width="1.300" d="M1760 382.600L1802 378.200M1853 372.800L1902 367.700" transform="translate(0 -2)" />
          <path fill="none" stroke="#e070d0" d="M1826 373.600L1853 370.800" />
          <g font-family="Open Sans,sans-serif" font-weight="700" fill="#53575c">
            <text x="1832" y="321" font-size="11" font-style="italic" text-anchor="middle" transform="rotate(4 1832 317)">TOP</text>
            <text x="1827" y="358" font-size="12" text-anchor="middle" transform="rotate(4 1827 354)">FRONT</text>
          </g>
          <g font-family="Liberation Sans,sans-serif" font-weight="700" fill="#b0b3b6">
            <text x="1773" y="358" font-size="18" font-style="italic" text-anchor="middle" transform="rotate(8 1773 353)">W</text>
            <text x="1894" y="375" font-size="18" text-anchor="middle" transform="rotate(4 1894 369)">E</text>
            <text x="1818" y="415" font-size="21" font-style="italic" text-anchor="middle">S</text>
          </g>
        </svg>
        <button class="wcs">WCS<i></i></button>
      </div>

      <div class="navbar">
        <button class="edge" aria-label="Close bar"><Icon name="navclose" /></button>
        <button v-for="(n, i) in navTools" :key="i" :class="n" :aria-label="n"><Icon :name="n" /></button>
        <button class="edge last" aria-label="Bar options"><Icon name="navmenu" /></button>
      </div>

      <div class="command">
        <div class="handle"><Icon name="grip" /><button aria-label="Close"><Icon name="cross" /></button><button aria-label="Customize"><Icon name="wrench" /></button></div>
        <div class="console">
          <div class="history">Command:<br />Press ESC or ENTER to exit, or right-click to display shortcut menu.</div>
          <div class="prompt">
            <Icon name="hand" /><Icon name="downgray" />
            <input type="text" value="PAN" aria-label="Command line" />
            <button aria-label="History"><Icon name="upgray" /></button>
          </div>
        </div>
      </div>
    </main>

    <footer class="layouts">
      <button class="model">Model</button>
      <button class="a3">a3</button>
      <Icon name="slash" />
      <button class="add" aria-label="New layout"><Icon name="plus" /></button>
      <Icon name="slash" />
      <div class="hint">Press pick button and drag to pan.</div>
    </footer>
  </div>
</template>

<style>
body { margin: 0; background: #222933; }
</style>

<style scoped>
.app { min-height: 100vh; display: flex; flex-direction: column; background: #222933; color: #f2f2f2; font: 14px/20px "Open Sans", "Noto Sans", sans-serif; overflow: hidden; }
button, select, input { font: inherit; color: inherit; border: 0; background: none; padding: 0; margin: 0; white-space: nowrap; }
button { display: flex; align-items: center; }

.titlebar { display: flex; height: 34px; align-items: flex-start; }
.quick { display: flex; gap: 10px; height: 26px; align-items: center; }
.logo { margin-right: 1px; }
.cad { background: #7a0a26; width: 25px; height: 15px; line-height: 15px; font-size: 10px; font-weight: 700; text-align: center; }
.drop { width: 24px; margin: 0 -10px; justify-content: center; }
.dim { opacity: .7; }
.customize { margin: 0 1px; }
.share { gap: 6px; color: #78c5ff; }
h1 { flex: 1; display: flex; justify-content: center; gap: 18px; margin: 0; font-size: 14px; font-weight: 400; line-height: 28px; }
.account { display: flex; height: 26px; align-items: center; }
.account input { width: 220px; height: 26px; margin-left: 8px; padding-left: 3px; background: #474f63; font-size: 13px; font-style: italic; }
.account input::placeholder { color: #b3b8c2; opacity: 1; }
.find { margin: 0 10px 0 5px; }
.user { gap: 8px; margin-right: 15px; }
.apps { gap: 8px; margin-left: 11px; padding-right: 13px; border-right: 1px solid #4a5361; }
.help { gap: 10px; margin-left: 11px; }
.window { display: flex; align-items: center; gap: 17px; height: 26px; margin: 0 6px 0 89px; }

.tabs { display: flex; gap: 1px; height: 25px; padding-left: 3px; color: #b3b6bb; }
.tabs button { padding: 0 12px; }
.tabs .on { background: #3b4453; color: #f2f2f2; }
.tabs .collapse { padding-left: 23px; gap: 6px; }
.collapse span { width: 19px; height: 9px; background: linear-gradient(#777, #777) center / 4px 3px no-repeat #fff; }

.ribbon { display: grid; grid-template-columns: 278fr 316fr 184fr 341fr 100fr 277fr 85fr 121fr 113fr 104fr; height: 124px; background: #3b4453; }
.panel { display: flex; flex-direction: column; min-width: 0; padding-top: 5px; border-right: 1px solid #252c37; }
.panel:last-child { border: 0; }
.body { display: grid; height: 93px; grid-template-rows: 93px; }
.name { display: flex; flex: 1; width: 100%; justify-content: center; align-items: center; gap: 8px; padding-top: 2px; box-sizing: border-box; }
.foot { display: flex; flex: 1; }
.launch { width: 18px; padding-top: 2px; }
.big { flex-direction: column; padding-top: 3px; justify-content: flex-start; text-align: center; }
.big svg:first-child { margin-bottom: 5px; }
.big .under { margin-top: 3px; }
.rows { display: grid; grid-template-rows: repeat(3, 31px); }
.tool { gap: 6px; }
.tool .side { margin-left: 4px; }
.tool .after { margin-left: 7px; }

.draw .body { grid-template-columns: 50px 56px 67px 46px 50px; padding-left: 2px; }
.draw .rows { padding-left: 7px; }
.modify .body { grid-template: repeat(3, 31px) / 92px 87px 95px 20px; padding-left: 7px; }
.annotation .body { grid-template-columns: 50px 80px 1fr; padding-left: 5px; }
.annotation .rows { padding-left: 4px; }
.layers .body { grid-template-columns: 77px 1fr; padding-right: 2px; }
.combo { display: flex; align-items: center; height: 26px; margin-top: 1px; padding-left: 7px; background: #4e5a6e; border: 1px solid #2a313e; min-width: 0; }
.layers .combo { padding-left: 6px; }
.combo select { flex: 1; appearance: none; min-width: 0; height: 26px; padding-left: 6px; }
.combo .arrow { margin-right: 2px; }
.c-sun { margin-left: 7px; }
.c-lock { margin: 0 6px 0 4px; }
.swatch { flex: none; width: 18px; height: 18px; background: #00f; border: 1px solid #e5e5e5; box-sizing: border-box; }
.properties .swatch { width: 20px; height: 20px; }
.icongrid { display: grid; grid-template: repeat(2, 31px) / repeat(5, 30px); padding: 3px 0 0 3px; }
.block .body { grid-template-columns: 52px 1fr; }
.block .rows { padding-left: 3px; }
.properties .body { grid-template-columns: 78px 24px 1fr; padding-right: 3px; }
.properties .rows:nth-child(2) { padding-left: 1px; }
.rule { flex: none; width: 80px; height: 1px; background: #fff; }
.rule + select { padding-left: 3px; }
.groups .body { grid-template-columns: 51px 1fr; }
.groups .rows .tool { width: 29px; height: 27px; align-self: center; box-sizing: border-box; padding-left: 5px; }
.groups .rows .on { padding-left: 4px; background: #4a6079; border: 1px solid #78c5ff; }
.utilities .body { grid-template-columns: 88px 1fr; }
.utilities .rows { padding-left: 3px; }
.clipboard .body { grid-template-columns: 66px 1fr; }
.clipboard .rows { padding-left: 2px; }
.view .body { grid-template-columns: 80px; }
.view .name { flex: none; width: 61px; }
.view .launch { justify-content: center; }

.files { display: flex; align-items: center; height: 33px; padding-left: 11px; border-bottom: 5px solid #3b4453; }
.files > button { padding-top: 2px; }
.start { margin: 0 9px 0 9px; }
.sheet { display: flex; align-items: center; gap: 10px; align-self: flex-end; height: 30px; padding: 0 15px 0 21px; margin-right: 9px; background: #3b4453; clip-path: polygon(12px 0, 100% 0, calc(100% - 12px) 100%, 0 100%); font-weight: 700; }
.files .add { margin-right: 12px; padding: 0; }

.viewport { position: relative; flex: 1; min-height: 600px; background: #212830; }
.drawing { position: absolute; inset: 0; width: 100%; height: 100%; }
.axes text { fill: #f0f0f0; font: 20px "Liberation Sans", sans-serif; }
.viewlabel { position: absolute; left: 2px; top: 6px; }
.docwin { position: absolute; right: 9px; top: 10px; display: flex; gap: 11px; }
.cube { position: absolute; right: 19px; top: 74px; display: flex; flex-direction: column; align-items: center; }
.cube svg { overflow: visible; }
.wcs { width: 56px; height: 21px; margin: 15px 0 0 4px; padding: 0 5px; box-sizing: border-box; justify-content: space-between; background: #8f93a2; border: 1px solid #a4a8b5; border-radius: 4px; color: #5c5f69; font: 13px "Liberation Sans", sans-serif; }
.wcs i { width: 8px; height: 5px; background: #aeb1ba; clip-path: polygon(0 0, 100% 0, 50% 100%); }
.navbar { position: absolute; right: 1px; top: 261px; width: 40px; height: 259px; box-sizing: border-box; padding: 1px 0; display: flex; flex-direction: column; align-items: center; background: #5a5f62; border-radius: 4px; box-shadow: 0 0 2px 1px #14181d; }
.edge { align-self: flex-end; margin-right: 1px; }
.last { margin-top: auto; }
.navwheel { margin-top: 8px; }
.navcaret { margin: 9px 0 5px; }
.navhand { border-top: 1px solid #666b6e; padding-top: 4px; }
.navzoom { margin-top: 6px; }
.navorbit { margin-top: 2px; }
.navzoom + .navcaret { margin: 8px 0 3px; }
.navorbit + .navcaret { margin: 8px 0 5px; }
.navshow { border-top: 1px solid #666b6e; padding-top: 3px; }

.command { position: absolute; left: 340px; right: 435px; bottom: -4px; height: 71px; display: flex; font: 15px/19px "DejaVu Sans Mono", monospace; color: #000; }
.handle { width: 31px; box-sizing: border-box; background: #2c3340; border-radius: 4px 0 0 4px; padding: 5px; display: flex; flex-direction: column; gap: 8px; }
.handle button { margin-left: 2px; }
.handle button:last-child { margin: 8px 0 0; }
.console { flex: 1; display: flex; flex-direction: column; background: #c7c7c7; border-right: 1px solid #c7c7c7; min-width: 0; }
.history { height: 46px; box-sizing: border-box; padding: 6px 0 0 3px; white-space: nowrap; border-bottom: 1px solid #222933; }
.prompt { display: flex; align-items: center; height: 24px; padding: 0 6px 0 5px; background: #fff; }
.prompt svg + svg { margin: 0 7px 0 2px; }
.prompt input { flex: 1; min-width: 0; padding-top: 2px; font-weight: 700; }

.layouts { display: flex; height: 36px; align-items: flex-start; border-top: 5px solid #3b4453; border-bottom: 1px solid #4a4a4a; padding-left: 9px; }
.layouts > button, .layouts > svg { height: 30px; }
.model { padding: 0 21px; background: #3b4453; clip-path: polygon(12px 0, 100% 0, calc(100% - 12px) 100%, 0 100%); font-weight: 700; }
.a3 { margin: 0 11px 0 9px; }
.layouts .add { margin: 0 12px; }
.hint { margin: 2px 1px 0 auto; height: 30px; padding: 0 5px 0 4px; background: #3b4453; font-size: 15px; line-height: 32px; }
</style>
